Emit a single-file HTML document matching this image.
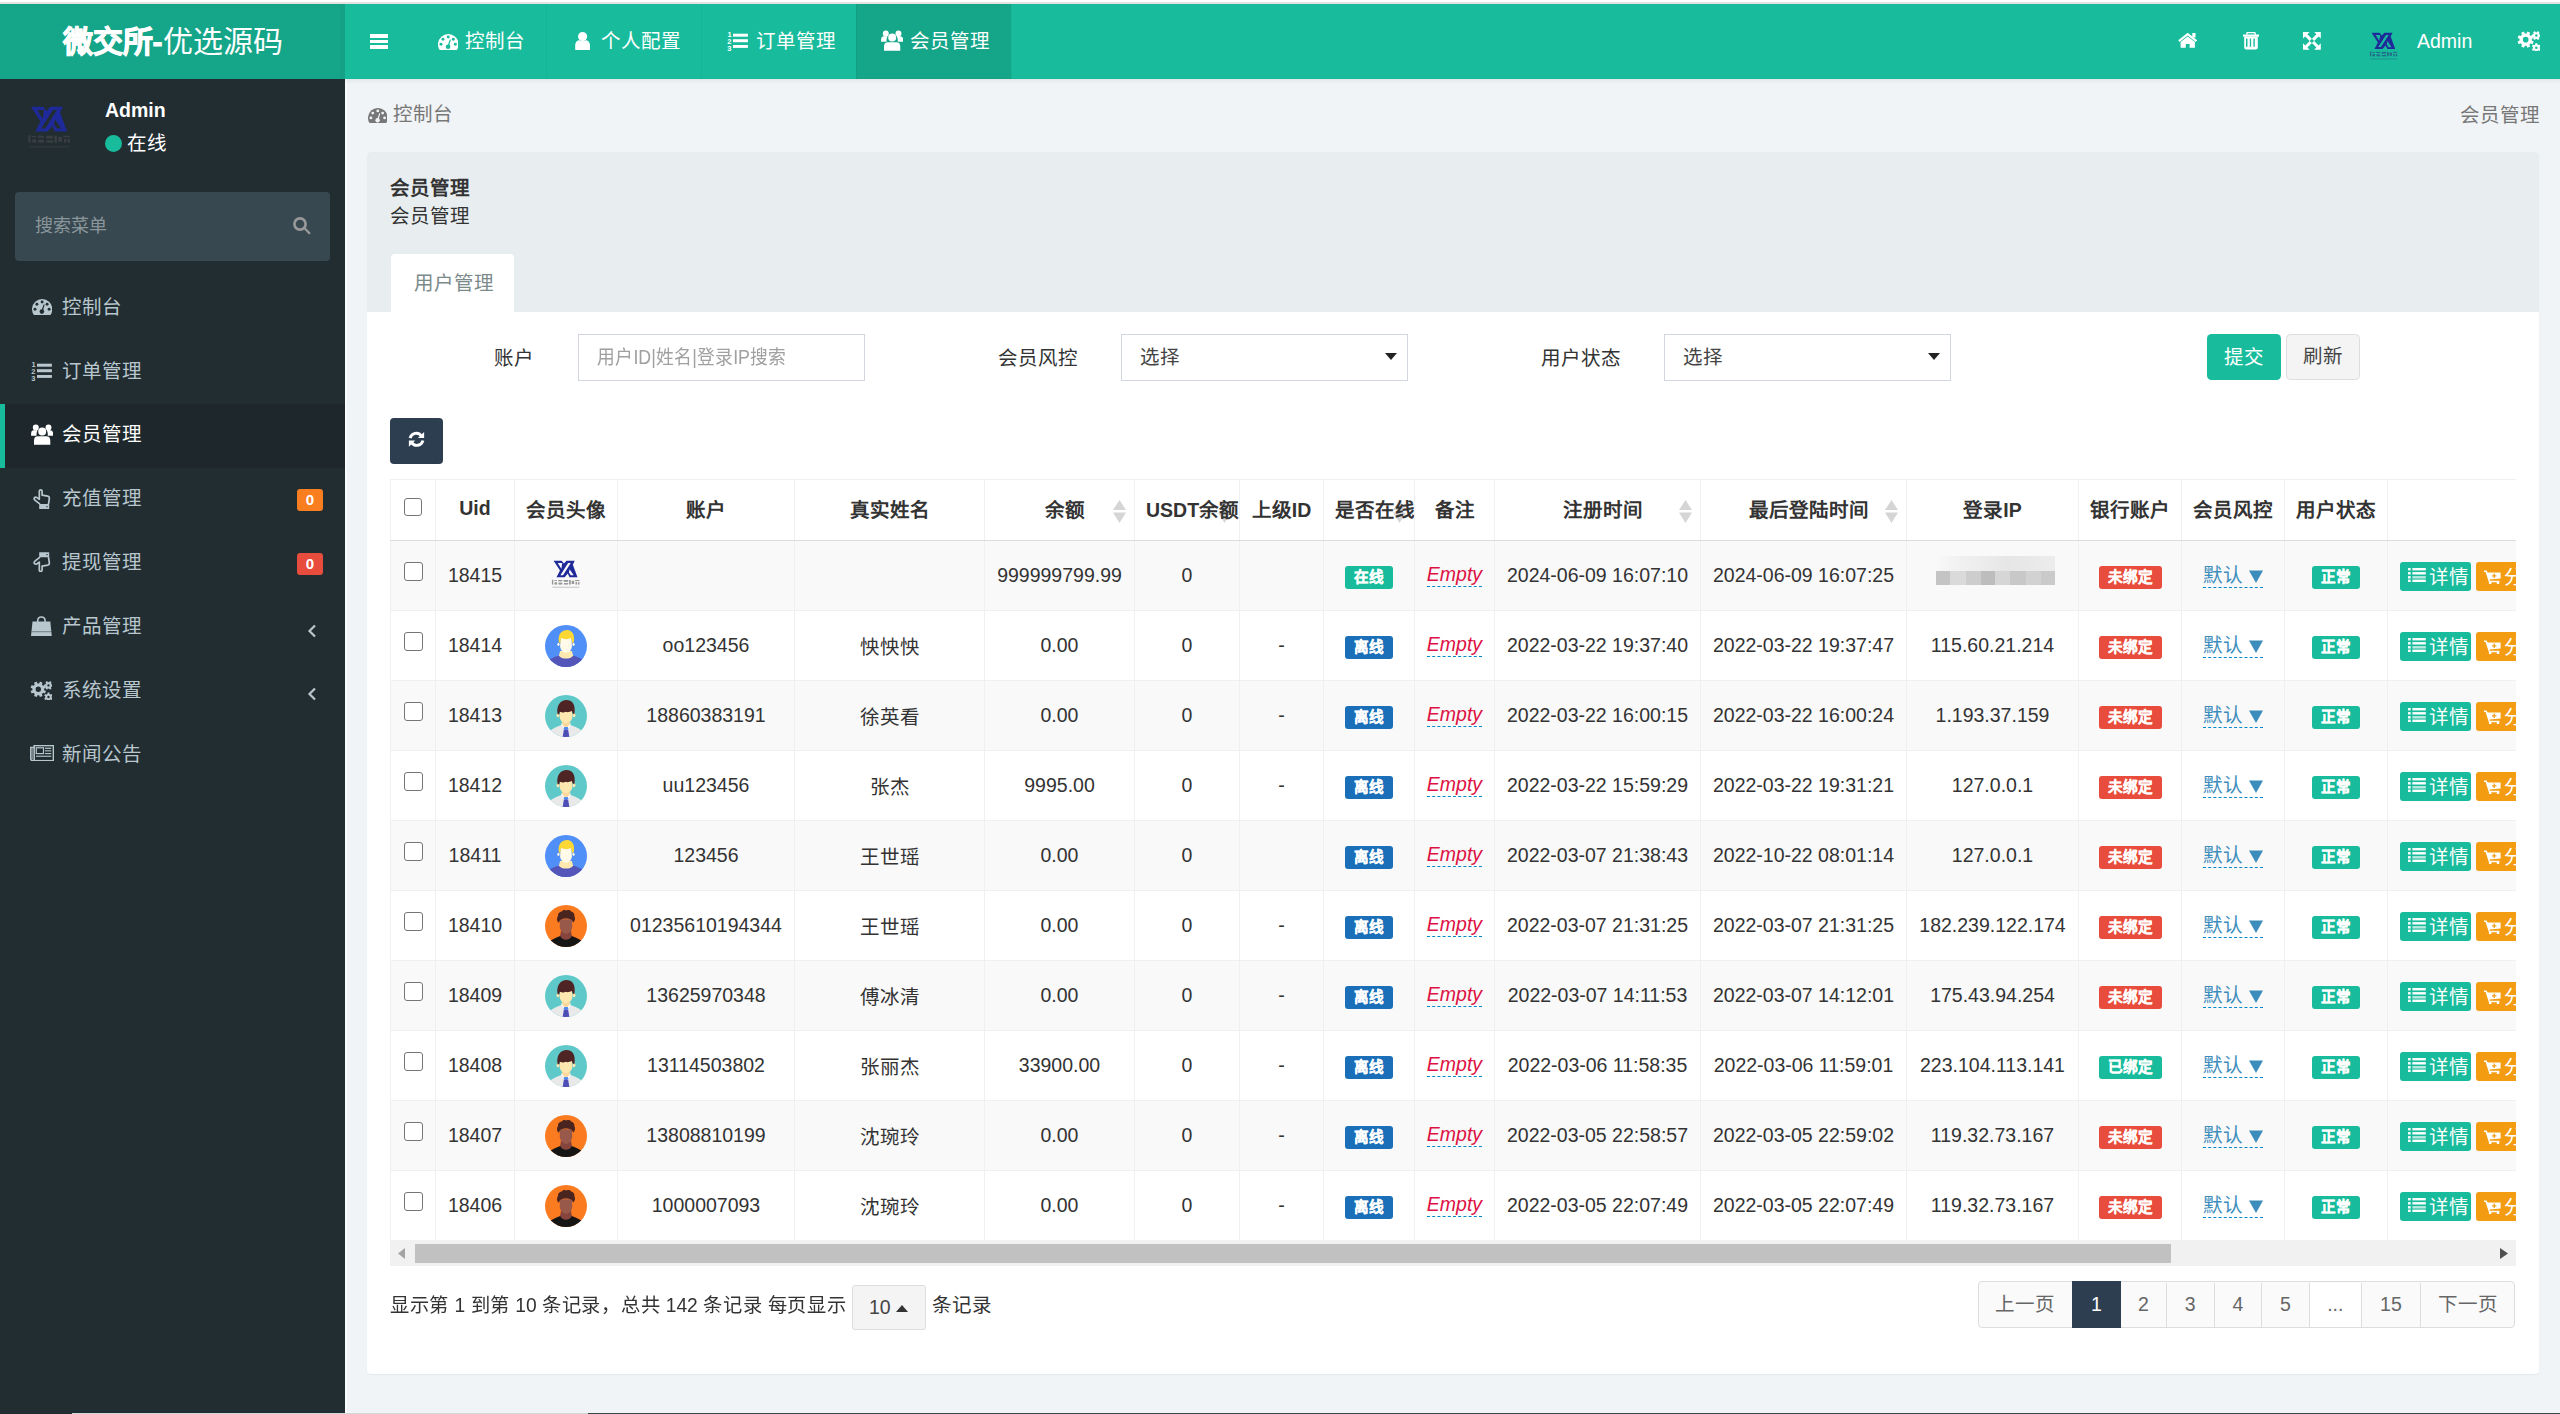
<!DOCTYPE html>
<html lang="zh-CN">
<head>
<meta charset="utf-8">
<title>会员管理</title>
<style>
*{box-sizing:border-box;margin:0;padding:0}
html,body{width:2560px;height:1414px;overflow:hidden;background:#f1f4f6;font-family:"Liberation Sans",sans-serif;color:#333}
.abs{position:absolute}
svg{display:block}
.t{position:absolute;white-space:nowrap;font-size:19.5px;line-height:28px}
#tbwrap{position:absolute;left:390px;top:479px;width:2126px;height:762px;overflow:hidden}
table.tb{border-collapse:collapse;table-layout:fixed;width:2513px;font-size:19.5px;color:#333}
table.tb th{height:61px;font-weight:bold;text-align:center;border:1px solid #f0f0f0;border-bottom:1.5px solid #dcdcdc;white-space:nowrap;padding:0 0 3px 0;position:relative}
table.tb td{height:70px;text-align:center;border:1px solid #f0f0f0;white-space:nowrap;padding:0;position:relative}
table.tb tr.odd td{background:#f9f9f9}
.cb{display:inline-block;width:19px;height:19px;border:1.5px solid #767676;border-radius:3px;background:#fff;vertical-align:middle;position:relative;top:-5px}
.lab{display:inline-block;height:22.5px;line-height:22.5px;padding:0 9px;border-radius:3px;color:#fff;font-size:14.6px;font-weight:bold;vertical-align:middle;-webkit-text-stroke:0.25px #fff;position:relative;top:1px}
.emp{color:#dd1144;font-style:italic;border-bottom:1.5px dashed #0088cc;line-height:23px;display:inline-block;position:relative;top:-1px}
.dft{color:#3c8dbc;border-bottom:1.5px dashed #0088cc;line-height:24px;display:inline-block}
.btn{display:inline-block;height:29px;line-height:29px;border-radius:3px;color:#fff;font-size:19.5px;vertical-align:middle;white-space:nowrap}
.sort{position:absolute;right:8px;top:20px;width:13px;height:23px}
.av{display:inline-block;width:42px;height:42px;vertical-align:middle}
</style>
</head>
<body>
<svg width="0" height="0" style="position:absolute">
<defs>
<clipPath id="avc"><circle cx="50" cy="50" r="50"/></clipPath>
<symbol id="av-blue" viewBox="0 0 100 100"><g clip-path="url(#avc)"><rect width="100" height="100" fill="#508ff7"/><path d="M0 100 L0 88 C18 78 30 73 40 71 L60 71 C70 73 82 78 100 88 L100 100z" fill="#5355b8"/><path d="M36 62 L64 62 L67 73 C60 82 40 82 33 73z" fill="#fde8b0"/><ellipse cx="32" cy="46" rx="2.6" ry="4" fill="#fffbe8"/><ellipse cx="68" cy="46" rx="2.6" ry="4" fill="#fffbe8"/><path d="M37 30 L63 30 L64 52 C62 62 56 66 50 66 C44 66 38 62 36 52z" fill="#fffbe8"/><path d="M33 40 C30 22 40 12 53 12 C65 13 71 22 69 40 L65 44 C64 38 63 34 61 31 C55 35 46 34 38 31 L36 44z" fill="#fdd835"/></g></symbol>
<symbol id="av-teal" viewBox="0 0 100 100"><g clip-path="url(#avc)"><rect width="100" height="100" fill="#5fc9c9"/><path d="M0 100 L0 92 C18 80 30 74 42 70 L58 70 C70 74 82 80 100 92 L100 100z" fill="#e9e9e9"/><path d="M38 68 L62 68 L56 80 L50 76 L44 80z" fill="#ffffff"/><path d="M40 62 L60 62 L58 72 L50 78 L42 72z" fill="#fcd79a"/><ellipse cx="31" cy="48" rx="3.5" ry="5" fill="#fde8b0"/><ellipse cx="69" cy="48" rx="3.5" ry="5" fill="#fde8b0"/><path d="M36 34 L64 34 L65 54 C63 62 56 67 50 67 C44 67 37 62 35 54z" fill="#fde8b0"/><path d="M30 46 C26 24 38 12 51 12 C64 12 74 22 70 46 L66 44 L64 38 C58 40 54 42 50 40 C46 42 40 42 35 40 L34 46z" fill="#4e2524"/><path d="M46 76 L54 76 L56 80 L50 84 L44 80z" fill="#4d8cf5"/><path d="M45 82 L55 82 L58 100 L42 100z" fill="#4d4db8"/></g></symbol>
<symbol id="av-orange" viewBox="0 0 100 100"><g clip-path="url(#avc)"><rect width="100" height="100" fill="#fb7b20"/><path d="M0 100 L0 92 C16 82 28 76 38 73 L62 73 C72 76 84 82 100 92 L100 100z" fill="#151515"/><path d="M38 62 L62 62 L64 73 C60 86 40 86 36 73z" fill="#86453c"/><path d="M36 34 L64 34 L65 52 C63 63 57 69 50 69 C43 69 37 63 35 52z" fill="#98584a"/><path d="M33 42 C27 38 28 30 31 26 C30 20 35 16 39 16 C42 11 48 11 51 13 C55 11 61 12 63 16 C68 17 71 22 70 27 C73 31 72 38 67 42 L64 36 C60 31 40 31 36 36z" fill="#4a2520"/></g></symbol>
<symbol id="yx" viewBox="150 200 1000 1000"><path fill="#1f2a9a" fill-rule="evenodd" d="M235 260L500 260L575 350L660 260L930 260L868 385L1020 800L760 800L700 680L600 800L330 800L445 580ZM370 330L520 330L490 520ZM712 330L800 330L545 730L458 730ZM760 535L895 735L800 735L740 640Z"/><g fill="currentColor" opacity="0.6"><rect x="180" y="880" width="45" height="160"/><rect x="260" y="895" width="90" height="30"/><rect x="265" y="965" width="85" height="75"/><rect x="390" y="890" width="130" height="45"/><rect x="395" y="975" width="125" height="65"/><rect x="565" y="890" width="150" height="60"/><rect x="570" y="990" width="145" height="50"/><rect x="745" y="890" width="55" height="150"/><rect x="830" y="915" width="80" height="105"/><rect x="940" y="890" width="145" height="35"/><rect x="955" y="960" width="50" height="80"/><rect x="1035" y="960" width="50" height="80"/></g><rect x="195" y="1110" width="890" height="35" fill="currentColor" opacity="0.3"/></symbol>
<symbol id="sorti" viewBox="0 0 13 23"><path d="M6.5 0L13 10H0z M6.5 23L0 12.5H13z" fill="#d5d5d5"/></symbol>
<symbol id="ilist" viewBox="0 0 100 100"><rect x="0" y="6" width="100" height="20"/><rect x="0" y="33" width="100" height="20"/><rect x="0" y="60" width="100" height="20"/><rect x="0" y="87" width="100" height="13"/><g fill="#18bc9c" opacity="0.5"><rect x="20" y="6" width="3" height="94"/></g></symbol>
<symbol id="icart" viewBox="0 0 100 100"><path d="M0 6h18l6 14h76l-10 44H34l3 10h55v10H30L12 16H0z"/><circle cx="38" cy="92" r="8"/><circle cx="82" cy="92" r="8"/><path d="M54 26h10v10h10v10H64v10H54V46H44V36h10z" fill="#f39c12"/></symbol>
</defs></svg>
<div class="abs" style="left:0;top:0;width:2560px;height:4px;background:#fff"></div>
<div class="abs" style="left:0;top:2px;width:2560px;height:2px;background:#e5e3e2"></div>
<div class="abs" style="left:0;top:4px;width:345px;height:75px;background:#15a589;color:#fff;font-size:30px;line-height:75px;text-align:center;white-space:nowrap"><b style="-webkit-text-stroke:0.9px #fff">微交所-</b>优选源码</div>
<div class="abs" style="left:345px;top:4px;width:2215px;height:75px;background:#18bc9c"></div>
<div class="abs" style="left:856px;top:4px;width:155px;height:75px;background:#15a589"></div>
<div class="abs" style="left:546px;top:4px;width:1px;height:75px;background:rgba(0,0,0,0.035)"></div>
<div class="abs" style="left:701px;top:4px;width:1px;height:75px;background:rgba(0,0,0,0.035)"></div>
<div class="abs" style="left:856px;top:4px;width:1px;height:75px;background:rgba(0,0,0,0.035)"></div>
<div class="abs" style="left:1011px;top:4px;width:1px;height:75px;background:rgba(0,0,0,0.035)"></div>
<div class="abs" style="left:370px;top:34px;width:18px;height:3.6px;background:#fff"></div>
<div class="abs" style="left:370px;top:39.5px;width:18px;height:3.6px;background:#fff"></div>
<div class="abs" style="left:370px;top:45px;width:18px;height:3.6px;background:#fff"></div>
<svg class="abs" style="left:437.8px;top:33.5px;" width="20.6" height="16.4" viewBox="0 0 20.6 16.4" fill="#fff"><mask id="dm1" maskUnits="userSpaceOnUse" x="0" y="0" width="20.6" height="16.4"><rect width="20.6" height="16.4" fill="#fff"/><g fill="#000"><circle cx="10.25" cy="3.04" r="1.47"/><circle cx="4.97" cy="5.28" r="1.47"/><circle cx="15.32" cy="5.28" r="1.47"/><circle cx="3.04" cy="10.35" r="1.47"/><circle cx="17.35" cy="10.35" r="1.47"/><circle cx="10.05" cy="12.79" r="2.33"/><path d="M9.34 12.79L11.77 5.48L12.89 5.68L10.86 12.79Z"/></g></mask><path d="M2.00 16.40A10.30 10.30 0 1 1 18.60 16.40Z" mask="url(#dm1)"/></svg>
<div class="t" style="left:465px;top:27px;color:#fff">控制台</div>
<svg class="abs" style="left:575px;top:31.6px;" width="15.2" height="18.5" viewBox="0 0 15.2 18.5" fill="#fff"><path d="M3.00 4.60a4.60 4.60 0 1 0 9.20 0a4.60 4.60 0 1 0 -9.20 0zM0.2 17.2V14C0.2 10.6 1.8 8.3 4.3 8.3Q7.6 10.2 10.9 8.3C13.4 8.3 15 10.6 15 14V17.2Q15 18.4 13.8 18.4H1.4Q0.2 18.4 0.2 17.2Z"/></svg>
<div class="t" style="left:601px;top:27px;color:#fff">个人配置</div>
<svg class="abs" style="left:727px;top:31px;" width="21" height="20" viewBox="0 0 21 20" fill="#fff"><rect x="6" y="2.7" width="14.9" height="3" /><rect x="6" y="8.2" width="14.9" height="3"/><rect x="6" y="14" width="14.9" height="2.9"/><g font-family="Liberation Sans" font-weight="bold" font-size="7.4"><text x="0.6" y="5.9">1</text><text x="0.2" y="12.8">2</text><text x="0.2" y="19.8">3</text></g></svg>
<div class="t" style="left:755.5px;top:27px;color:#fff">订单管理</div>
<svg class="abs" style="left:880.6px;top:30.1px;" width="22.4" height="20.9" viewBox="0 0 22.4 20.9" fill="#fff"><path d="M1.80 3.40a3.00 3.00 0 1 0 6.00 0a3.00 3.00 0 1 0 -6.00 0zM14.50 3.40a3.00 3.00 0 1 0 6.00 0a3.00 3.00 0 1 0 -6.00 0zM0.1 11.8V9.8Q0.1 6.3 3 6.3H6.6Q5.2 8 5.6 11.8ZM22.2 11.8V9.8Q22.2 6.3 19.3 6.3H15.7Q17.1 8 16.7 11.8ZM7.20 7.60a4.00 4.00 0 1 0 8.00 0a4.00 4.00 0 1 0 -8.00 0zM3 20.7V16.7Q3 12.3 7 12.3H15.3Q19.3 12.3 19.3 16.7V20.7Z"/></svg>
<div class="t" style="left:910px;top:27px;color:#fff">会员管理</div>
<svg class="abs" style="left:2178.4px;top:33px;" width="19.6" height="15" viewBox="0 0 19.6 15" fill="#fff"><path d="M0.9 8.2L9.7 1.1L18.5 8.2" fill="none" stroke="#fff" stroke-width="2.2" stroke-linecap="butt"/><rect x="14.3" y="0" width="3.2" height="4.5"/><path d="M2.6 9L9.7 3.4L16.9 9V14.8H11.6V11.1H7.8V14.8H2.6Z"/></svg>
<svg class="abs" style="left:2242.8px;top:32.1px;" width="16" height="17.6" viewBox="0 0 16 17.6" fill="#fff"><rect x="0" y="2.5" width="16" height="2.2"/><path d="M3.8 2.8V1.6Q3.8 0.6 4.8 0.6H11.2Q12.2 0.6 12.2 1.6V2.8" fill="none" stroke="#fff" stroke-width="1.4"/><path d="M1.2 4.5H14.8V15.5Q14.8 17.5 12.8 17.5H3.2Q1.2 17.5 1.2 15.5Z M3 6.5V14.7H4.5V6.5Z M6.8 6.5V14.7H8.1V6.5Z M10.4 6.5V14.7H11.8V6.5Z" fill-rule="evenodd"/></svg>
<svg class="abs" style="left:2302.8px;top:31.9px;" width="17.8" height="17.8" viewBox="0 0 17.8 17.8" fill="#fff"><path d="M0 0H6.6L4.4 2.2L8.9 6.7L6.7 8.9L2.2 4.4L0 6.6Z"/><path d="M17.8 0V6.6L15.6 4.4L11.1 8.9L8.9 6.7L13.4 2.2L11.2 0Z"/><path d="M0 17.8V11.2L2.2 13.4L6.7 8.9L8.9 11.1L4.4 15.6L6.6 17.8Z"/><path d="M17.8 17.8H11.2L13.4 15.6L8.9 11.1L11.1 8.9L15.6 13.4L17.8 11.2Z"/></svg>
<svg class="abs" style="left:2368.7px;top:31px;color:#2a3a7a" width="30.2" height="30.2"><use href="#yx"/></svg>
<div class="t" style="left:2417px;top:27px;color:#fff">Admin</div>
<svg class="abs" style="left:2516.5px;top:30.8px;" width="23" height="20.5" viewBox="0 0 23 20.5" fill="#fff"><path fill-rule="evenodd" d="M14.85 8.68 L14.78 9.57 L16.76 10.40 L15.60 13.18 L13.62 12.37 L13.04 13.04 L12.37 13.63 L13.18 15.61 L10.39 16.76 L9.56 14.79 L8.68 14.85 L7.79 14.79 L6.96 16.76 L4.18 15.61 L4.99 13.63 L4.32 13.04 L3.73 12.37 L1.75 13.18 L0.60 10.40 L2.57 9.57 L2.51 8.68 L2.57 7.79 L0.60 6.97 L1.75 4.18 L3.73 4.99 L4.32 4.32 L4.99 3.74 L4.18 1.76 L6.96 0.60 L7.79 2.58 L8.68 2.51 L9.56 2.58 L10.39 0.60 L13.18 1.76 L12.37 3.74 L13.04 4.32 L13.62 4.99 L15.60 4.18 L16.76 6.97 L14.78 7.79ZM5.85 8.68a2.82 2.82 0 1 0 5.65 0a2.82 2.82 0 1 0 -5.65 0z"/><path fill-rule="evenodd" d="M22.33 2.88 L22.64 3.58 L23.93 3.56 L23.93 5.64 L22.64 5.62 L22.33 6.33 L21.87 6.94 L22.53 8.05 L20.74 9.09 L20.10 7.96 L19.34 8.05 L18.58 7.96 L17.95 9.09 L16.15 8.05 L16.81 6.94 L16.35 6.32 L16.05 5.62 L14.75 5.64 L14.75 3.56 L16.05 3.58 L16.35 2.87 L16.81 2.26 L16.15 1.15 L17.95 0.11 L18.58 1.24 L19.34 1.15 L20.10 1.24 L20.74 0.11 L22.53 1.15 L21.87 2.26ZM18.09 4.60a1.25 1.25 0 1 0 2.51 0a1.25 1.25 0 1 0 -2.51 0z"/><path fill-rule="evenodd" d="M22.79 16.73 L22.71 17.49 L23.83 18.12 L22.80 19.92 L21.68 19.26 L21.07 19.72 L20.36 20.02 L20.38 21.32 L18.30 21.32 L18.32 20.02 L17.62 19.71 L17.00 19.26 L15.89 19.92 L14.85 18.12 L15.98 17.49 L15.89 16.73 L15.98 15.97 L14.85 15.33 L15.89 13.53 L17.00 14.19 L17.62 13.74 L18.32 13.43 L18.30 12.14 L20.38 12.14 L20.36 13.43 L21.07 13.74 L21.68 14.19 L22.80 13.53 L23.83 15.33 L22.71 15.97ZM18.09 16.73a1.25 1.25 0 1 0 2.51 0a1.25 1.25 0 1 0 -2.51 0z"/></svg>
<div class="abs" style="left:0;top:79px;width:345px;height:1335px;background:#222d32"></div>
<svg class="abs" style="left:26.9px;top:104.2px;color:#4a4a4a" width="46" height="46"><use href="#yx"/></svg>
<div class="t" style="left:105px;top:96px;color:#fff;font-weight:bold">Admin</div>
<div class="abs" style="left:105px;top:135px;width:17px;height:17px;border-radius:50%;background:#18bc9c"></div>
<div class="t" style="left:127px;top:129px;color:#fff">在线</div>
<div class="abs" style="left:15px;top:192px;width:315px;height:69px;background:#374850;border-radius:4px"></div>
<div class="t" style="left:35px;top:212px;color:#8b969b;font-size:18px">搜索菜单</div>
<svg class="abs" style="left:293px;top:217px;" width="17.5" height="17.5" viewBox="0 0 17.5 17.5" fill="#999"><circle cx="7" cy="7" r="5.6" fill="none" stroke="#999" stroke-width="2.6"/><path d="M10.6 11.8l1.5-1.5 5 5q0.8 0.8 0 1.6q-0.8 0.8-1.6 0z"/></svg>
<div class="t" style="left:62px;top:292.70px;color:#b8c7ce">控制台</div>
<div class="t" style="left:62px;top:356.56px;color:#b8c7ce">订单管理</div>
<div class="abs" style="left:0;top:404.02px;width:345px;height:63.86px;background:#1e282c"></div>
<div class="abs" style="left:0;top:404.02px;width:4.5px;height:63.86px;background:#18bc9c"></div>
<div class="t" style="left:62px;top:420.42px;color:#fff">会员管理</div>
<div class="t" style="left:62px;top:484.28px;color:#b8c7ce">充值管理</div>
<div class="t" style="left:62px;top:548.14px;color:#b8c7ce">提现管理</div>
<div class="t" style="left:62px;top:612.00px;color:#b8c7ce">产品管理</div>
<div class="t" style="left:62px;top:675.86px;color:#b8c7ce">系统设置</div>
<div class="t" style="left:62px;top:739.72px;color:#b8c7ce">新闻公告</div>
<svg class="abs" style="left:31.7px;top:299.4px;" width="20.3" height="16.5" viewBox="0 0 20.3 16.5" fill="#b8c7ce"><mask id="dm2" maskUnits="userSpaceOnUse" x="0" y="0" width="20.3" height="16.5"><rect width="20.3" height="16.5" fill="#fff"/><g fill="#000"><circle cx="10.10" cy="3.00" r="1.45"/><circle cx="4.90" cy="5.20" r="1.45"/><circle cx="15.10" cy="5.20" r="1.45"/><circle cx="3.00" cy="10.20" r="1.45"/><circle cx="17.10" cy="10.20" r="1.45"/><circle cx="9.90" cy="12.60" r="2.30"/><path d="M9.20 12.60L11.60 5.40L12.70 5.60L10.70 12.60Z"/></g></mask><path d="M2.23 16.50A10.15 10.15 0 1 1 18.07 16.50Z" mask="url(#dm2)"/></svg>
<svg class="abs" style="left:31px;top:361px;" width="21" height="20" viewBox="0 0 21 20" fill="#b8c7ce"><rect x="6" y="2.7" width="14.9" height="3" /><rect x="6" y="8.2" width="14.9" height="3"/><rect x="6" y="14" width="14.9" height="2.9"/><g font-family="Liberation Sans" font-weight="bold" font-size="7.4"><text x="0.6" y="5.9">1</text><text x="0.2" y="12.8">2</text><text x="0.2" y="19.8">3</text></g></svg>
<svg class="abs" style="left:30.7px;top:424.2px;" width="22.4" height="20.9" viewBox="0 0 22.4 20.9" fill="#fff"><path d="M1.80 3.40a3.00 3.00 0 1 0 6.00 0a3.00 3.00 0 1 0 -6.00 0zM14.50 3.40a3.00 3.00 0 1 0 6.00 0a3.00 3.00 0 1 0 -6.00 0zM0.1 11.8V9.8Q0.1 6.3 3 6.3H6.6Q5.2 8 5.6 11.8ZM22.2 11.8V9.8Q22.2 6.3 19.3 6.3H15.7Q17.1 8 16.7 11.8ZM7.20 7.60a4.00 4.00 0 1 0 8.00 0a4.00 4.00 0 1 0 -8.00 0zM3 20.7V16.7Q3 12.3 7 12.3H15.3Q19.3 12.3 19.3 16.7V20.7Z"/></svg>
<svg class="abs" style="left:32.9px;top:488.7px;" width="18" height="20.3" viewBox="0 0 18 20.3" fill="#b8c7ce"><path d="M7 15.2L2.2 11.4Q0.6 10 1.4 8.8Q2.4 7.6 4 8.6L6.3 10.2V2.3Q6.3 0.9 7.7 0.9Q9.1 0.9 9.1 2.3V6.2L14.8 7.1Q16.4 7.5 16.4 9.2L15.5 15.2" fill="none" stroke="#b8c7ce" stroke-width="1.7" stroke-linejoin="round"/><rect x="6.2" y="15" width="10" height="5.2" rx="0.5"/><rect x="13.4" y="17.1" width="1.2" height="1.2" fill="#222d32"/></svg>
<svg class="abs" style="left:32.9px;top:551.7px;transform:scaleY(-1);" width="18" height="20.3" viewBox="0 0 18 20.3" fill="#b8c7ce"><path d="M7 15.2L2.2 11.4Q0.6 10 1.4 8.8Q2.4 7.6 4 8.6L6.3 10.2V2.3Q6.3 0.9 7.7 0.9Q9.1 0.9 9.1 2.3V6.2L14.8 7.1Q16.4 7.5 16.4 9.2L15.5 15.2" fill="none" stroke="#b8c7ce" stroke-width="1.7" stroke-linejoin="round"/><rect x="6.2" y="15" width="10" height="5.2" rx="0.5"/><rect x="13.4" y="17.1" width="1.2" height="1.2" fill="#222d32"/></svg>
<svg class="abs" style="left:31.4px;top:615.7px;" width="20.8" height="20.1" viewBox="0 0 20.8 20.1" fill="#b8c7ce"><path d="M1.5 5.4H19.3L20.8 20.1H0Z"/><path d="M6.7 9V4.8Q6.7 1 10.4 1Q14.1 1 14.1 4.8V9" fill="none" stroke="#b8c7ce" stroke-width="1.6"/><rect x="0.5" y="15.3" width="20" height="0.9" fill="#222d32" opacity="0.55"/></svg>
<svg class="abs" style="left:29.6px;top:680.8px;" width="22" height="19.6" viewBox="0 0 22 19.6" fill="#b8c7ce"><path fill-rule="evenodd" d="M14.20 8.30 L14.14 9.15 L16.03 9.94 L14.92 12.60 L13.03 11.83 L12.47 12.47 L11.83 13.03 L12.60 14.92 L9.94 16.03 L9.15 14.14 L8.30 14.20 L7.45 14.14 L6.66 16.03 L4.00 14.92 L4.77 13.03 L4.13 12.47 L3.57 11.83 L1.68 12.60 L0.57 9.94 L2.46 9.15 L2.40 8.30 L2.46 7.45 L0.57 6.66 L1.68 4.00 L3.57 4.77 L4.13 4.13 L4.77 3.57 L4.00 1.68 L6.66 0.57 L7.45 2.46 L8.30 2.40 L9.15 2.46 L9.94 0.57 L12.60 1.68 L11.83 3.57 L12.47 4.13 L13.03 4.77 L14.92 4.00 L16.03 6.66 L14.14 7.45ZM5.60 8.30a2.70 2.70 0 1 0 5.40 0a2.70 2.70 0 1 0 -5.40 0z"/><path fill-rule="evenodd" d="M21.36 2.75 L21.65 3.42 L22.89 3.41 L22.89 5.39 L21.65 5.38 L21.36 6.05 L20.92 6.64 L21.55 7.70 L19.83 8.70 L19.23 7.62 L18.50 7.70 L17.77 7.62 L17.17 8.70 L15.45 7.70 L16.08 6.64 L15.64 6.05 L15.35 5.38 L14.11 5.39 L14.11 3.41 L15.35 3.42 L15.64 2.75 L16.08 2.16 L15.45 1.10 L17.17 0.10 L17.77 1.18 L18.50 1.10 L19.23 1.18 L19.83 0.10 L21.55 1.10 L20.92 2.16ZM17.30 4.40a1.20 1.20 0 1 0 2.40 0a1.20 1.20 0 1 0 -2.40 0z"/><path fill-rule="evenodd" d="M21.80 16.00 L21.72 16.73 L22.80 17.33 L21.80 19.05 L20.74 18.42 L20.15 18.86 L19.48 19.15 L19.49 20.39 L17.51 20.39 L17.52 19.15 L16.85 18.86 L16.26 18.42 L15.20 19.05 L14.20 17.33 L15.28 16.73 L15.20 16.00 L15.28 15.27 L14.20 14.67 L15.20 12.95 L16.26 13.58 L16.85 13.14 L17.52 12.85 L17.51 11.61 L19.49 11.61 L19.48 12.85 L20.15 13.14 L20.74 13.58 L21.80 12.95 L22.80 14.67 L21.72 15.27ZM17.30 16.00a1.20 1.20 0 1 0 2.40 0a1.20 1.20 0 1 0 -2.40 0z"/></svg>
<svg class="abs" style="left:30px;top:744.7px;" width="24.2" height="16.4" viewBox="0 0 24.2 16.4" fill="#b8c7ce"><rect x="4.2" y="0.6" width="19.2" height="15.1" fill="none" stroke="#b8c7ce" stroke-width="1.5"/><path d="M4.2 2.6H0.8V13.8Q0.8 15.6 2.6 15.6H4.2" fill="none" stroke="#b8c7ce" stroke-width="1.5"/><rect x="1.8" y="3.4" width="1.1" height="10.6" opacity="0.6"/><rect x="6.3" y="2.8" width="7.2" height="5.8" fill="none" stroke="#b8c7ce" stroke-width="1.2"/><rect x="15" y="2.7" width="6.3" height="1.2"/><rect x="15" y="5.3" width="6.3" height="1.1"/><rect x="15" y="8" width="6.3" height="1.1"/><rect x="6" y="10.7" width="15.3" height="1.1"/></svg>
<div class="abs" style="left:297px;top:489px;width:26px;height:22px;border-radius:3px;background:#f97e1f;color:#fff;font-size:15px;font-weight:bold;line-height:22px;text-align:center">0</div>
<div class="abs" style="left:297px;top:553px;width:26px;height:22px;border-radius:3px;background:#e74c3c;color:#fff;font-size:15px;font-weight:bold;line-height:22px;text-align:center">0</div>
<svg class="abs" style="left:307px;top:623.5px" width="10" height="14" viewBox="0 0 10 14"><path d="M8 1.5L2.5 7 8 12.5" fill="none" stroke="#b8c7ce" stroke-width="2.2"/></svg>
<svg class="abs" style="left:307px;top:687.3px" width="10" height="14" viewBox="0 0 10 14"><path d="M8 1.5L2.5 7 8 12.5" fill="none" stroke="#b8c7ce" stroke-width="2.2"/></svg>
<div class="abs" style="left:340px;top:4px;width:5px;height:75px;background:rgba(0,0,0,0.018)"></div>
<div class="abs" style="left:345px;top:79px;width:1.5px;height:1335px;background:#fafbfc"></div>
<div class="abs" style="left:345px;top:78px;width:2215px;height:1px;background:rgba(0,0,0,0.02)"></div>
<div class="abs" style="left:345px;top:79px;width:2215px;height:5px;background:linear-gradient(rgba(0,0,0,0.05),rgba(0,0,0,0))"></div>
<svg class="abs" style="left:367.5px;top:107.6px;" width="19.7" height="15.9" viewBox="0 0 19.7 15.9" fill="#777"><mask id="dm3" maskUnits="userSpaceOnUse" x="0" y="0" width="19.7" height="15.9"><rect width="19.7" height="15.9" fill="#fff"/><g fill="#000"><circle cx="9.80" cy="2.91" r="1.41"/><circle cx="4.76" cy="5.05" r="1.41"/><circle cx="14.65" cy="5.05" r="1.41"/><circle cx="2.91" cy="9.90" r="1.41"/><circle cx="16.59" cy="9.90" r="1.41"/><circle cx="9.61" cy="12.23" r="2.23"/><path d="M8.93 12.23L11.26 5.24L12.32 5.43L10.38 12.23Z"/></g></mask><path d="M2.08 15.90A9.85 9.85 0 1 1 17.62 15.90Z" mask="url(#dm3)"/></svg>
<div class="t" style="left:393px;top:100px;color:#777">控制台</div>
<div class="t" style="left:2460px;top:101px;color:#777">会员管理</div>
<div class="abs" style="left:367px;top:152px;width:2172px;height:1222px;background:#fff;border-radius:4px;box-shadow:0 1px 1px rgba(0,0,0,0.05)"></div>
<div class="abs" style="left:367px;top:152px;width:2172px;height:160px;background:#e8edf0;border-radius:4px 4px 0 0"></div>
<div class="t" style="left:390px;top:174px;font-weight:bold;color:#333">会员管理</div>
<div class="t" style="left:390px;top:202px;color:#333">会员管理</div>
<div class="abs" style="left:391px;top:254px;width:123px;height:58px;background:#fff;border-radius:4px 4px 0 0"></div>
<div class="t" style="left:414px;top:269px;color:#7b8a8b">用户管理</div>
<div class="t" style="left:494px;top:344px;color:#333">账户</div>
<div class="abs" style="left:578px;top:334px;width:287px;height:47px;border:1.5px solid #d2d6de;background:#fff"></div><div class="t" style="left:597px;top:343px;color:#a0a0a0;transform:scaleX(0.91);transform-origin:0 0;">用户ID|姓名|登录IP搜索</div>
<div class="t" style="left:998px;top:344px;color:#333">会员风控</div>
<div class="abs" style="left:1121px;top:334px;width:287px;height:47px;border:1.5px solid #d2d6de;background:#fff"></div><div class="t" style="left:1140px;top:343px;color:#444;">选择</div><svg class="abs" style="left:1385px;top:353px" width="12" height="7"><path d="M0 0H12L6 7z" fill="#222"/></svg>
<div class="t" style="left:1541px;top:344px;color:#333">用户状态</div>
<div class="abs" style="left:1664px;top:334px;width:287px;height:47px;border:1.5px solid #d2d6de;background:#fff"></div><div class="t" style="left:1683px;top:343px;color:#444;">选择</div><svg class="abs" style="left:1928px;top:353px" width="12" height="7"><path d="M0 0H12L6 7z" fill="#222"/></svg>
<div class="abs" style="left:2207px;top:334px;width:74px;height:46px;background:#18bc9c;border-radius:4.5px;color:#fff;font-size:19.5px;line-height:46px;text-align:center">提交</div>
<div class="abs" style="left:2286px;top:334px;width:74px;height:46px;background:#f4f4f4;border:1.5px solid #ddd;border-radius:4.5px;color:#444;font-size:19.5px;line-height:43px;text-align:center">刷新</div>
<div class="abs" style="left:390px;top:418px;width:53px;height:46px;background:#2c3e50;border-radius:4px"></div>
<svg class="abs" style="left:408px;top:431.2px;" width="17" height="16.6" viewBox="0 0 17 16.6" fill="#fff"><path d="M2.1 7.1A6.3 6.3 0 0 1 13.4 4.9" fill="none" stroke="#fff" stroke-width="2.9"/><path d="M16.1 0.9V7.1H9.9Z"/><path d="M14.9 9.5A6.3 6.3 0 0 1 3.6 11.7" fill="none" stroke="#fff" stroke-width="2.9"/><path d="M0.9 15.7V9.5H7.1Z"/></svg>
<div id="tbwrap"><table class="tb"><colgroup><col style="width:45px"><col style="width:79px"><col style="width:103px"><col style="width:177px"><col style="width:190px"><col style="width:150px"><col style="width:105px"><col style="width:84px"><col style="width:91px"><col style="width:80px"><col style="width:206px"><col style="width:206px"><col style="width:172px"><col style="width:103px"><col style="width:103px"><col style="width:103px"><col style="width:516px"></colgroup>
<tr>
<th><span class="cb" style="width:18px;height:18px;top:-2.5px"></span></th>
<th>Uid</th>
<th>会员头像</th>
<th>账户</th>
<th>真实姓名</th>
<th><svg class="sort"><use href="#sorti"/></svg><div style="position:relative;overflow:hidden;padding-left:11px">余额</div></th>
<th><svg class="sort"><use href="#sorti"/></svg><div style="position:relative;overflow:hidden;padding-left:11px">USDT余额</div></th>
<th>上级ID</th>
<th><svg class="sort"><use href="#sorti"/></svg><div style="position:relative;overflow:hidden;padding-left:11px">是否在线</div></th>
<th>备注</th>
<th><svg class="sort"><use href="#sorti"/></svg><div style="position:relative;overflow:hidden;padding-left:11px">注册时间</div></th>
<th><svg class="sort"><use href="#sorti"/></svg><div style="position:relative;overflow:hidden;padding-left:11px">最后登陆时间</div></th>
<th>登录IP</th>
<th>银行账户</th>
<th>会员风控</th>
<th>用户状态</th>
<th></th>
</tr>
<tr class="odd">
<td><span class="cb"></span></td>
<td>18415</td>
<td><svg class="abs" style="left:35.6px;top:18.4px;color:#555" width="30.45" height="30.45"><use href="#yx"/></svg></td>
<td></td><td></td><td>999999799.99</td><td>0</td><td></td>
<td><span class="lab" style="background:#18bc9c">在线</span></td>
<td><span class="emp">Empty</span></td>
<td>2024-06-09 16:07:10</td><td>2024-06-09 16:07:25</td>
<td><div class="abs" style="left:29px;top:14.6px;width:119px;height:15px;background:linear-gradient(90deg,#f9f9f9 0,#f2f2f2 15%,#ececec 40%,#e6e6e6 60%,#ececec 100%)"></div><div class="abs" style="left:29px;top:29.6px;width:119px;height:14.5px;background:linear-gradient(90deg,#c4c4c4 0 12%,#dadada 12% 25%,#cdcdcd 25% 38%,#bdbdbd 38% 50%,#d6d6d6 50% 62%,#c8c8c8 62% 76%,#d2d2d2 76% 88%,#cacaca 88% 100%)"></div></td>
<td><span class="lab" style="background:#e74c3c">未绑定</span></td>
<td><span class="dft">默认 <svg style="display:inline-block;vertical-align:-1px" width="14" height="13"><path d="M0 0.5H14L7 13z" fill="#3c8dbc"/></svg></span></td>
<td><span class="lab" style="background:#18bc9c">正常</span></td>
<td style="text-align:left"><div class="abs" style="left:12px;top:21px;width:71px;height:29px;border-radius:3px;background:#18bc9c"></div><svg class="abs" style="left:19.5px;top:27.2px" width="18" height="14" fill="#fff"><rect x="0" y="0" width="2.7" height="2.4"/><rect x="4.4" y="0" width="13.4" height="2.4"/><rect x="0" y="4.1" width="2.7" height="2.4"/><rect x="4.4" y="4.1" width="13.4" height="2.4"/><rect x="0" y="8.1" width="2.7" height="2.4"/><rect x="4.4" y="8.1" width="13.4" height="2.4" opacity="0.7"/><rect x="0" y="11.6" width="2.7" height="2.4"/><rect x="4.4" y="11.6" width="13.4" height="2.4"/></svg><div class="t" style="left:40.5px;top:21.5px;color:#fff">详情</div><div class="abs" style="left:88px;top:21px;width:90px;height:29px;border-radius:3px;background:#f39c12"></div><svg class="abs" style="left:96px;top:28.7px" width="17" height="14" fill="#fff"><path d="M0 0.6H2.6L3.6 2.4H16.6V8.6L5.4 9.6L5.9 10.8H15.4V12.2H4.9L1.6 1.9H0Z"/><circle cx="6.2" cy="12.9" r="1.3"/><circle cx="14" cy="12.9" r="1.3"/><path d="M9.6 3.6h1.2v1.6h1.6v1.2h-1.6v1.6h-1.2v-1.6h-1.6v-1.2h1.6z" fill="#f39c12"/></svg><div class="t" style="left:116.4px;top:21.5px;color:#fff">分配</div></td>
</tr>
<tr>
<td><span class="cb"></span></td>
<td>18414</td>
<td><svg class="av"><use href="#av-blue"/></svg></td>
<td>oo123456</td><td>怏怏怏</td><td>0.00</td><td>0</td><td>-</td>
<td><span class="lab" style="background:#1a6fb8">离线</span></td>
<td><span class="emp">Empty</span></td>
<td>2022-03-22 19:37:40</td><td>2022-03-22 19:37:47</td>
<td>115.60.21.214</td>
<td><span class="lab" style="background:#e74c3c">未绑定</span></td>
<td><span class="dft">默认 <svg style="display:inline-block;vertical-align:-1px" width="14" height="13"><path d="M0 0.5H14L7 13z" fill="#3c8dbc"/></svg></span></td>
<td><span class="lab" style="background:#18bc9c">正常</span></td>
<td style="text-align:left"><div class="abs" style="left:12px;top:21px;width:71px;height:29px;border-radius:3px;background:#18bc9c"></div><svg class="abs" style="left:19.5px;top:27.2px" width="18" height="14" fill="#fff"><rect x="0" y="0" width="2.7" height="2.4"/><rect x="4.4" y="0" width="13.4" height="2.4"/><rect x="0" y="4.1" width="2.7" height="2.4"/><rect x="4.4" y="4.1" width="13.4" height="2.4"/><rect x="0" y="8.1" width="2.7" height="2.4"/><rect x="4.4" y="8.1" width="13.4" height="2.4" opacity="0.7"/><rect x="0" y="11.6" width="2.7" height="2.4"/><rect x="4.4" y="11.6" width="13.4" height="2.4"/></svg><div class="t" style="left:40.5px;top:21.5px;color:#fff">详情</div><div class="abs" style="left:88px;top:21px;width:90px;height:29px;border-radius:3px;background:#f39c12"></div><svg class="abs" style="left:96px;top:28.7px" width="17" height="14" fill="#fff"><path d="M0 0.6H2.6L3.6 2.4H16.6V8.6L5.4 9.6L5.9 10.8H15.4V12.2H4.9L1.6 1.9H0Z"/><circle cx="6.2" cy="12.9" r="1.3"/><circle cx="14" cy="12.9" r="1.3"/><path d="M9.6 3.6h1.2v1.6h1.6v1.2h-1.6v1.6h-1.2v-1.6h-1.6v-1.2h1.6z" fill="#f39c12"/></svg><div class="t" style="left:116.4px;top:21.5px;color:#fff">分配</div></td>
</tr>
<tr class="odd">
<td><span class="cb"></span></td>
<td>18413</td>
<td><svg class="av"><use href="#av-teal"/></svg></td>
<td>18860383191</td><td>徐英看</td><td>0.00</td><td>0</td><td>-</td>
<td><span class="lab" style="background:#1a6fb8">离线</span></td>
<td><span class="emp">Empty</span></td>
<td>2022-03-22 16:00:15</td><td>2022-03-22 16:00:24</td>
<td>1.193.37.159</td>
<td><span class="lab" style="background:#e74c3c">未绑定</span></td>
<td><span class="dft">默认 <svg style="display:inline-block;vertical-align:-1px" width="14" height="13"><path d="M0 0.5H14L7 13z" fill="#3c8dbc"/></svg></span></td>
<td><span class="lab" style="background:#18bc9c">正常</span></td>
<td style="text-align:left"><div class="abs" style="left:12px;top:21px;width:71px;height:29px;border-radius:3px;background:#18bc9c"></div><svg class="abs" style="left:19.5px;top:27.2px" width="18" height="14" fill="#fff"><rect x="0" y="0" width="2.7" height="2.4"/><rect x="4.4" y="0" width="13.4" height="2.4"/><rect x="0" y="4.1" width="2.7" height="2.4"/><rect x="4.4" y="4.1" width="13.4" height="2.4"/><rect x="0" y="8.1" width="2.7" height="2.4"/><rect x="4.4" y="8.1" width="13.4" height="2.4" opacity="0.7"/><rect x="0" y="11.6" width="2.7" height="2.4"/><rect x="4.4" y="11.6" width="13.4" height="2.4"/></svg><div class="t" style="left:40.5px;top:21.5px;color:#fff">详情</div><div class="abs" style="left:88px;top:21px;width:90px;height:29px;border-radius:3px;background:#f39c12"></div><svg class="abs" style="left:96px;top:28.7px" width="17" height="14" fill="#fff"><path d="M0 0.6H2.6L3.6 2.4H16.6V8.6L5.4 9.6L5.9 10.8H15.4V12.2H4.9L1.6 1.9H0Z"/><circle cx="6.2" cy="12.9" r="1.3"/><circle cx="14" cy="12.9" r="1.3"/><path d="M9.6 3.6h1.2v1.6h1.6v1.2h-1.6v1.6h-1.2v-1.6h-1.6v-1.2h1.6z" fill="#f39c12"/></svg><div class="t" style="left:116.4px;top:21.5px;color:#fff">分配</div></td>
</tr>
<tr>
<td><span class="cb"></span></td>
<td>18412</td>
<td><svg class="av"><use href="#av-teal"/></svg></td>
<td>uu123456</td><td>张杰</td><td>9995.00</td><td>0</td><td>-</td>
<td><span class="lab" style="background:#1a6fb8">离线</span></td>
<td><span class="emp">Empty</span></td>
<td>2022-03-22 15:59:29</td><td>2022-03-22 19:31:21</td>
<td>127.0.0.1</td>
<td><span class="lab" style="background:#e74c3c">未绑定</span></td>
<td><span class="dft">默认 <svg style="display:inline-block;vertical-align:-1px" width="14" height="13"><path d="M0 0.5H14L7 13z" fill="#3c8dbc"/></svg></span></td>
<td><span class="lab" style="background:#18bc9c">正常</span></td>
<td style="text-align:left"><div class="abs" style="left:12px;top:21px;width:71px;height:29px;border-radius:3px;background:#18bc9c"></div><svg class="abs" style="left:19.5px;top:27.2px" width="18" height="14" fill="#fff"><rect x="0" y="0" width="2.7" height="2.4"/><rect x="4.4" y="0" width="13.4" height="2.4"/><rect x="0" y="4.1" width="2.7" height="2.4"/><rect x="4.4" y="4.1" width="13.4" height="2.4"/><rect x="0" y="8.1" width="2.7" height="2.4"/><rect x="4.4" y="8.1" width="13.4" height="2.4" opacity="0.7"/><rect x="0" y="11.6" width="2.7" height="2.4"/><rect x="4.4" y="11.6" width="13.4" height="2.4"/></svg><div class="t" style="left:40.5px;top:21.5px;color:#fff">详情</div><div class="abs" style="left:88px;top:21px;width:90px;height:29px;border-radius:3px;background:#f39c12"></div><svg class="abs" style="left:96px;top:28.7px" width="17" height="14" fill="#fff"><path d="M0 0.6H2.6L3.6 2.4H16.6V8.6L5.4 9.6L5.9 10.8H15.4V12.2H4.9L1.6 1.9H0Z"/><circle cx="6.2" cy="12.9" r="1.3"/><circle cx="14" cy="12.9" r="1.3"/><path d="M9.6 3.6h1.2v1.6h1.6v1.2h-1.6v1.6h-1.2v-1.6h-1.6v-1.2h1.6z" fill="#f39c12"/></svg><div class="t" style="left:116.4px;top:21.5px;color:#fff">分配</div></td>
</tr>
<tr class="odd">
<td><span class="cb"></span></td>
<td>18411</td>
<td><svg class="av"><use href="#av-blue"/></svg></td>
<td>123456</td><td>王世瑶</td><td>0.00</td><td>0</td><td></td>
<td><span class="lab" style="background:#1a6fb8">离线</span></td>
<td><span class="emp">Empty</span></td>
<td>2022-03-07 21:38:43</td><td>2022-10-22 08:01:14</td>
<td>127.0.0.1</td>
<td><span class="lab" style="background:#e74c3c">未绑定</span></td>
<td><span class="dft">默认 <svg style="display:inline-block;vertical-align:-1px" width="14" height="13"><path d="M0 0.5H14L7 13z" fill="#3c8dbc"/></svg></span></td>
<td><span class="lab" style="background:#18bc9c">正常</span></td>
<td style="text-align:left"><div class="abs" style="left:12px;top:21px;width:71px;height:29px;border-radius:3px;background:#18bc9c"></div><svg class="abs" style="left:19.5px;top:27.2px" width="18" height="14" fill="#fff"><rect x="0" y="0" width="2.7" height="2.4"/><rect x="4.4" y="0" width="13.4" height="2.4"/><rect x="0" y="4.1" width="2.7" height="2.4"/><rect x="4.4" y="4.1" width="13.4" height="2.4"/><rect x="0" y="8.1" width="2.7" height="2.4"/><rect x="4.4" y="8.1" width="13.4" height="2.4" opacity="0.7"/><rect x="0" y="11.6" width="2.7" height="2.4"/><rect x="4.4" y="11.6" width="13.4" height="2.4"/></svg><div class="t" style="left:40.5px;top:21.5px;color:#fff">详情</div><div class="abs" style="left:88px;top:21px;width:90px;height:29px;border-radius:3px;background:#f39c12"></div><svg class="abs" style="left:96px;top:28.7px" width="17" height="14" fill="#fff"><path d="M0 0.6H2.6L3.6 2.4H16.6V8.6L5.4 9.6L5.9 10.8H15.4V12.2H4.9L1.6 1.9H0Z"/><circle cx="6.2" cy="12.9" r="1.3"/><circle cx="14" cy="12.9" r="1.3"/><path d="M9.6 3.6h1.2v1.6h1.6v1.2h-1.6v1.6h-1.2v-1.6h-1.6v-1.2h1.6z" fill="#f39c12"/></svg><div class="t" style="left:116.4px;top:21.5px;color:#fff">分配</div></td>
</tr>
<tr>
<td><span class="cb"></span></td>
<td>18410</td>
<td><svg class="av"><use href="#av-orange"/></svg></td>
<td>01235610194344</td><td>王世瑶</td><td>0.00</td><td>0</td><td>-</td>
<td><span class="lab" style="background:#1a6fb8">离线</span></td>
<td><span class="emp">Empty</span></td>
<td>2022-03-07 21:31:25</td><td>2022-03-07 21:31:25</td>
<td>182.239.122.174</td>
<td><span class="lab" style="background:#e74c3c">未绑定</span></td>
<td><span class="dft">默认 <svg style="display:inline-block;vertical-align:-1px" width="14" height="13"><path d="M0 0.5H14L7 13z" fill="#3c8dbc"/></svg></span></td>
<td><span class="lab" style="background:#18bc9c">正常</span></td>
<td style="text-align:left"><div class="abs" style="left:12px;top:21px;width:71px;height:29px;border-radius:3px;background:#18bc9c"></div><svg class="abs" style="left:19.5px;top:27.2px" width="18" height="14" fill="#fff"><rect x="0" y="0" width="2.7" height="2.4"/><rect x="4.4" y="0" width="13.4" height="2.4"/><rect x="0" y="4.1" width="2.7" height="2.4"/><rect x="4.4" y="4.1" width="13.4" height="2.4"/><rect x="0" y="8.1" width="2.7" height="2.4"/><rect x="4.4" y="8.1" width="13.4" height="2.4" opacity="0.7"/><rect x="0" y="11.6" width="2.7" height="2.4"/><rect x="4.4" y="11.6" width="13.4" height="2.4"/></svg><div class="t" style="left:40.5px;top:21.5px;color:#fff">详情</div><div class="abs" style="left:88px;top:21px;width:90px;height:29px;border-radius:3px;background:#f39c12"></div><svg class="abs" style="left:96px;top:28.7px" width="17" height="14" fill="#fff"><path d="M0 0.6H2.6L3.6 2.4H16.6V8.6L5.4 9.6L5.9 10.8H15.4V12.2H4.9L1.6 1.9H0Z"/><circle cx="6.2" cy="12.9" r="1.3"/><circle cx="14" cy="12.9" r="1.3"/><path d="M9.6 3.6h1.2v1.6h1.6v1.2h-1.6v1.6h-1.2v-1.6h-1.6v-1.2h1.6z" fill="#f39c12"/></svg><div class="t" style="left:116.4px;top:21.5px;color:#fff">分配</div></td>
</tr>
<tr class="odd">
<td><span class="cb"></span></td>
<td>18409</td>
<td><svg class="av"><use href="#av-teal"/></svg></td>
<td>13625970348</td><td>傅冰清</td><td>0.00</td><td>0</td><td>-</td>
<td><span class="lab" style="background:#1a6fb8">离线</span></td>
<td><span class="emp">Empty</span></td>
<td>2022-03-07 14:11:53</td><td>2022-03-07 14:12:01</td>
<td>175.43.94.254</td>
<td><span class="lab" style="background:#e74c3c">未绑定</span></td>
<td><span class="dft">默认 <svg style="display:inline-block;vertical-align:-1px" width="14" height="13"><path d="M0 0.5H14L7 13z" fill="#3c8dbc"/></svg></span></td>
<td><span class="lab" style="background:#18bc9c">正常</span></td>
<td style="text-align:left"><div class="abs" style="left:12px;top:21px;width:71px;height:29px;border-radius:3px;background:#18bc9c"></div><svg class="abs" style="left:19.5px;top:27.2px" width="18" height="14" fill="#fff"><rect x="0" y="0" width="2.7" height="2.4"/><rect x="4.4" y="0" width="13.4" height="2.4"/><rect x="0" y="4.1" width="2.7" height="2.4"/><rect x="4.4" y="4.1" width="13.4" height="2.4"/><rect x="0" y="8.1" width="2.7" height="2.4"/><rect x="4.4" y="8.1" width="13.4" height="2.4" opacity="0.7"/><rect x="0" y="11.6" width="2.7" height="2.4"/><rect x="4.4" y="11.6" width="13.4" height="2.4"/></svg><div class="t" style="left:40.5px;top:21.5px;color:#fff">详情</div><div class="abs" style="left:88px;top:21px;width:90px;height:29px;border-radius:3px;background:#f39c12"></div><svg class="abs" style="left:96px;top:28.7px" width="17" height="14" fill="#fff"><path d="M0 0.6H2.6L3.6 2.4H16.6V8.6L5.4 9.6L5.9 10.8H15.4V12.2H4.9L1.6 1.9H0Z"/><circle cx="6.2" cy="12.9" r="1.3"/><circle cx="14" cy="12.9" r="1.3"/><path d="M9.6 3.6h1.2v1.6h1.6v1.2h-1.6v1.6h-1.2v-1.6h-1.6v-1.2h1.6z" fill="#f39c12"/></svg><div class="t" style="left:116.4px;top:21.5px;color:#fff">分配</div></td>
</tr>
<tr>
<td><span class="cb"></span></td>
<td>18408</td>
<td><svg class="av"><use href="#av-teal"/></svg></td>
<td>13114503802</td><td>张丽杰</td><td>33900.00</td><td>0</td><td>-</td>
<td><span class="lab" style="background:#1a6fb8">离线</span></td>
<td><span class="emp">Empty</span></td>
<td>2022-03-06 11:58:35</td><td>2022-03-06 11:59:01</td>
<td>223.104.113.141</td>
<td><span class="lab" style="background:#18bc9c">已绑定</span></td>
<td><span class="dft">默认 <svg style="display:inline-block;vertical-align:-1px" width="14" height="13"><path d="M0 0.5H14L7 13z" fill="#3c8dbc"/></svg></span></td>
<td><span class="lab" style="background:#18bc9c">正常</span></td>
<td style="text-align:left"><div class="abs" style="left:12px;top:21px;width:71px;height:29px;border-radius:3px;background:#18bc9c"></div><svg class="abs" style="left:19.5px;top:27.2px" width="18" height="14" fill="#fff"><rect x="0" y="0" width="2.7" height="2.4"/><rect x="4.4" y="0" width="13.4" height="2.4"/><rect x="0" y="4.1" width="2.7" height="2.4"/><rect x="4.4" y="4.1" width="13.4" height="2.4"/><rect x="0" y="8.1" width="2.7" height="2.4"/><rect x="4.4" y="8.1" width="13.4" height="2.4" opacity="0.7"/><rect x="0" y="11.6" width="2.7" height="2.4"/><rect x="4.4" y="11.6" width="13.4" height="2.4"/></svg><div class="t" style="left:40.5px;top:21.5px;color:#fff">详情</div><div class="abs" style="left:88px;top:21px;width:90px;height:29px;border-radius:3px;background:#f39c12"></div><svg class="abs" style="left:96px;top:28.7px" width="17" height="14" fill="#fff"><path d="M0 0.6H2.6L3.6 2.4H16.6V8.6L5.4 9.6L5.9 10.8H15.4V12.2H4.9L1.6 1.9H0Z"/><circle cx="6.2" cy="12.9" r="1.3"/><circle cx="14" cy="12.9" r="1.3"/><path d="M9.6 3.6h1.2v1.6h1.6v1.2h-1.6v1.6h-1.2v-1.6h-1.6v-1.2h1.6z" fill="#f39c12"/></svg><div class="t" style="left:116.4px;top:21.5px;color:#fff">分配</div></td>
</tr>
<tr class="odd">
<td><span class="cb"></span></td>
<td>18407</td>
<td><svg class="av"><use href="#av-orange"/></svg></td>
<td>13808810199</td><td>沈琬玲</td><td>0.00</td><td>0</td><td>-</td>
<td><span class="lab" style="background:#1a6fb8">离线</span></td>
<td><span class="emp">Empty</span></td>
<td>2022-03-05 22:58:57</td><td>2022-03-05 22:59:02</td>
<td>119.32.73.167</td>
<td><span class="lab" style="background:#e74c3c">未绑定</span></td>
<td><span class="dft">默认 <svg style="display:inline-block;vertical-align:-1px" width="14" height="13"><path d="M0 0.5H14L7 13z" fill="#3c8dbc"/></svg></span></td>
<td><span class="lab" style="background:#18bc9c">正常</span></td>
<td style="text-align:left"><div class="abs" style="left:12px;top:21px;width:71px;height:29px;border-radius:3px;background:#18bc9c"></div><svg class="abs" style="left:19.5px;top:27.2px" width="18" height="14" fill="#fff"><rect x="0" y="0" width="2.7" height="2.4"/><rect x="4.4" y="0" width="13.4" height="2.4"/><rect x="0" y="4.1" width="2.7" height="2.4"/><rect x="4.4" y="4.1" width="13.4" height="2.4"/><rect x="0" y="8.1" width="2.7" height="2.4"/><rect x="4.4" y="8.1" width="13.4" height="2.4" opacity="0.7"/><rect x="0" y="11.6" width="2.7" height="2.4"/><rect x="4.4" y="11.6" width="13.4" height="2.4"/></svg><div class="t" style="left:40.5px;top:21.5px;color:#fff">详情</div><div class="abs" style="left:88px;top:21px;width:90px;height:29px;border-radius:3px;background:#f39c12"></div><svg class="abs" style="left:96px;top:28.7px" width="17" height="14" fill="#fff"><path d="M0 0.6H2.6L3.6 2.4H16.6V8.6L5.4 9.6L5.9 10.8H15.4V12.2H4.9L1.6 1.9H0Z"/><circle cx="6.2" cy="12.9" r="1.3"/><circle cx="14" cy="12.9" r="1.3"/><path d="M9.6 3.6h1.2v1.6h1.6v1.2h-1.6v1.6h-1.2v-1.6h-1.6v-1.2h1.6z" fill="#f39c12"/></svg><div class="t" style="left:116.4px;top:21.5px;color:#fff">分配</div></td>
</tr>
<tr>
<td><span class="cb"></span></td>
<td>18406</td>
<td><svg class="av"><use href="#av-orange"/></svg></td>
<td>1000007093</td><td>沈琬玲</td><td>0.00</td><td>0</td><td>-</td>
<td><span class="lab" style="background:#1a6fb8">离线</span></td>
<td><span class="emp">Empty</span></td>
<td>2022-03-05 22:07:49</td><td>2022-03-05 22:07:49</td>
<td>119.32.73.167</td>
<td><span class="lab" style="background:#e74c3c">未绑定</span></td>
<td><span class="dft">默认 <svg style="display:inline-block;vertical-align:-1px" width="14" height="13"><path d="M0 0.5H14L7 13z" fill="#3c8dbc"/></svg></span></td>
<td><span class="lab" style="background:#18bc9c">正常</span></td>
<td style="text-align:left"><div class="abs" style="left:12px;top:21px;width:71px;height:29px;border-radius:3px;background:#18bc9c"></div><svg class="abs" style="left:19.5px;top:27.2px" width="18" height="14" fill="#fff"><rect x="0" y="0" width="2.7" height="2.4"/><rect x="4.4" y="0" width="13.4" height="2.4"/><rect x="0" y="4.1" width="2.7" height="2.4"/><rect x="4.4" y="4.1" width="13.4" height="2.4"/><rect x="0" y="8.1" width="2.7" height="2.4"/><rect x="4.4" y="8.1" width="13.4" height="2.4" opacity="0.7"/><rect x="0" y="11.6" width="2.7" height="2.4"/><rect x="4.4" y="11.6" width="13.4" height="2.4"/></svg><div class="t" style="left:40.5px;top:21.5px;color:#fff">详情</div><div class="abs" style="left:88px;top:21px;width:90px;height:29px;border-radius:3px;background:#f39c12"></div><svg class="abs" style="left:96px;top:28.7px" width="17" height="14" fill="#fff"><path d="M0 0.6H2.6L3.6 2.4H16.6V8.6L5.4 9.6L5.9 10.8H15.4V12.2H4.9L1.6 1.9H0Z"/><circle cx="6.2" cy="12.9" r="1.3"/><circle cx="14" cy="12.9" r="1.3"/><path d="M9.6 3.6h1.2v1.6h1.6v1.2h-1.6v1.6h-1.2v-1.6h-1.6v-1.2h1.6z" fill="#f39c12"/></svg><div class="t" style="left:116.4px;top:21.5px;color:#fff">分配</div></td>
</tr>
</table></div>
<div class="abs" style="left:390px;top:1241px;width:2126px;height:25px;background:#f1f1f1">
<div class="abs" style="left:25px;top:3px;width:1756px;height:19px;background:#c1c1c1"></div>
<svg class="abs" style="left:8px;top:7px" width="8" height="11"><path d="M7 0V11L0 5.5z" fill="#a3a3a3"/></svg>
<svg class="abs" style="left:2110px;top:7px" width="8" height="11"><path d="M0 0V11L8 5.5z" fill="#505050"/></svg>
</div>
<div class="t" style="left:390px;top:1291px;color:#333;transform:scaleX(0.986);transform-origin:0 0">显示第 1 到第 10 条记录，总共 142 条记录 每页显示</div>
<div class="abs" style="left:852px;top:1285px;width:74px;height:45px;background:#f4f4f4;border:1.5px solid #ddd;border-radius:3px;font-size:19.5px;color:#444;line-height:42px;padding-left:16px">10</div>
<svg class="abs" style="left:896px;top:1305px" width="12" height="7"><path d="M6 0L12 7H0z" fill="#333"/></svg>
<div class="t" style="left:932px;top:1291px;color:#333">条记录</div>
<div class="abs" style="left:1977.6px;top:1281px;width:537.8px;height:47.4px;border:1.5px solid #ddd;border-radius:4px;background:#fafafa"></div>
<div class="abs" style="left:1977.6px;top:1281px;width:94.4px;height:47.4px;line-height:47.4px;text-align:center;font-size:19.5px;color:#666">上一页</div>
<div class="abs" style="left:2072.0px;top:1281px;width:48.8px;height:47.4px;background:#2c3e50"></div>
<div class="abs" style="left:2072.0px;top:1281px;width:48.8px;height:47.4px;line-height:47.4px;text-align:center;font-size:19.5px;color:#fff">1</div>
<div class="abs" style="left:2165.7px;top:1282.5px;width:1px;height:44.4px;background:#ddd"></div>
<div class="abs" style="left:2120.8px;top:1281px;width:45.4px;height:47.4px;line-height:47.4px;text-align:center;font-size:19.5px;color:#666">2</div>
<div class="abs" style="left:2213.8px;top:1282.5px;width:1px;height:44.4px;background:#ddd"></div>
<div class="abs" style="left:2166.2px;top:1281px;width:48.1px;height:47.4px;line-height:47.4px;text-align:center;font-size:19.5px;color:#666">3</div>
<div class="abs" style="left:2260.9px;top:1282.5px;width:1px;height:44.4px;background:#ddd"></div>
<div class="abs" style="left:2214.3px;top:1281px;width:47.1px;height:47.4px;line-height:47.4px;text-align:center;font-size:19.5px;color:#666">4</div>
<div class="abs" style="left:2308.9px;top:1282.5px;width:1px;height:44.4px;background:#ddd"></div>
<div class="abs" style="left:2261.4px;top:1281px;width:48.0px;height:47.4px;line-height:47.4px;text-align:center;font-size:19.5px;color:#666">5</div>
<div class="abs" style="left:2309.9px;top:1282.5px;width:51.4px;height:44.4px;background:#fff"></div>
<div class="abs" style="left:2360.8px;top:1282.5px;width:1px;height:44.4px;background:#ddd"></div>
<div class="abs" style="left:2309.4px;top:1281px;width:51.9px;height:47.4px;line-height:47.4px;text-align:center;font-size:19.5px;color:#666">...</div>
<div class="abs" style="left:2420.1px;top:1282.5px;width:1px;height:44.4px;background:#ddd"></div>
<div class="abs" style="left:2361.3px;top:1281px;width:59.3px;height:47.4px;line-height:47.4px;text-align:center;font-size:19.5px;color:#666">15</div>
<div class="abs" style="left:2420.6px;top:1281px;width:94.8px;height:47.4px;line-height:47.4px;text-align:center;font-size:19.5px;color:#666">下一页</div>
<div class="abs" style="left:72px;top:1413px;width:516px;height:1px;background:#d5d8d9"></div><div class="abs" style="left:588px;top:1413px;width:1972px;height:1px;background:#3b4549"></div>
</body>
</html>
